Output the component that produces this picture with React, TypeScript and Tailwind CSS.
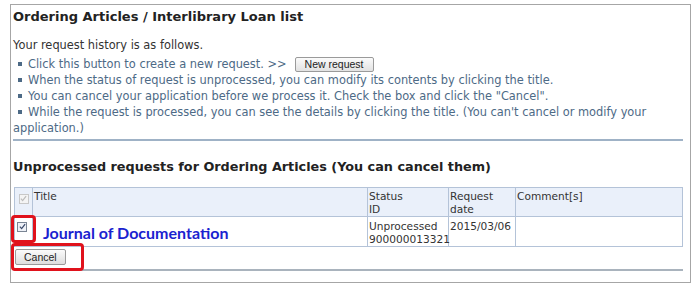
import React from "react";

const verdana = { fontFamily: '"DejaVu Sans", Verdana, sans-serif' };
const tahoma = { fontFamily: '"Liberation Sans", Tahoma, sans-serif' };

function Box({ checked, disabled }: { checked?: boolean; disabled?: boolean }) {
  return (
    <span
      className={`inline-flex h-[10px] w-[10px] items-center justify-center border ${
        disabled ? "border-[#c8c8c8] bg-[#f4f4f4]" : "border-[#7a8594] bg-[#eef1f7]"
      }`}
    >
      {checked && (
        <svg width="7" height="7" viewBox="0 0 8 8">
          <path
            d="M1 4.2 L3 6.4 L7 1.2"
            fill="none"
            stroke={disabled ? "#bcbcbc" : "#3b4a6b"}
            strokeWidth="1.4"
          />
        </svg>
      )}
    </span>
  );
}

function Bullet({ children }: { children: React.ReactNode }) {
  return (
    <li className="flex">
      <span className="mr-[6px] mt-[6px] h-[4px] w-[4px] shrink-0 bg-[#4d6a86]" />
      <span>{children}</span>
    </li>
  );
}

export default function App() {
  return (
    <div className="h-[290px] w-[700px] bg-white pl-[10px] pt-[4px]" style={verdana}>
      <div className="relative h-[279px] w-[681px] border border-[#a6a6a6] pl-[2px] pr-[3px]">
        <h1 className="mt-[4px] text-[13px] font-bold leading-[16px] text-[#222]">
          Ordering Articles / Interlibrary Loan list
        </h1>

        <p className="mt-[12px] text-[11.4px] leading-[16px] text-[#333]">Your request history is as follows.</p>
        <ul className="mt-[3px] pl-[5px] text-[11.4px] leading-[16px] text-[#4d6a86]">
          <li className="flex items-center">
            <span className="mr-[6px] h-[4px] w-[4px] shrink-0 bg-[#4d6a86]" />
            Click this button to create a new request. &gt;&gt;
            <button
              className="ml-[8px] h-[15px] rounded-[2px] border border-[#9a9a9a] bg-gradient-to-b from-[#fbfbfb] to-[#e2e2e2] px-[9px] text-[10.5px] leading-[13px] text-[#222]"
              style={tahoma}
            >
              New request
            </button>
          </li>
          <Bullet>When the status of request is unprocessed, you can modify its contents by clicking the title.</Bullet>
          <Bullet>You can cancel your application before we process it. Check the box and click the "Cancel".</Bullet>
          <li className="-ml-[5px]">
            <span className="ml-[5px] mr-[6px] inline-block h-[4px] w-[4px] -translate-y-[2px] bg-[#4d6a86]" />
            While the request is processed, you can see the details by clicking the title. (You can't cancel or modify your
            application.)
          </li>
        </ul>

        <div className="mt-[3px] h-[2px] w-[670px] bg-[#9fb2c6]" />

        <h2 className="mt-[18px] text-[12.8px] font-bold leading-[16px] text-[#222]">
          Unprocessed requests for Ordering Articles (You can cancel them)
        </h2>

        <table className="ml-[1px] mt-[12px] w-[669px] table-fixed border-collapse text-[10.6px] leading-[13px] text-[#333]">
          <colgroup>
            <col className="w-[18px]" />
            <col />
            <col className="w-[81px]" />
            <col className="w-[67px]" />
            <col className="w-[167px]" />
          </colgroup>
          <thead>
            <tr className="h-[29px] bg-[#eaf0fa] align-top">
              <th className="border border-[#b4c3d8] px-[2px] pt-[4px] font-normal">
                <Box checked disabled />
              </th>
              <th className="border border-[#b4c3d8] px-[1px] pt-[2px] text-left font-normal">Title</th>
              <th className="border border-[#b4c3d8] px-[1px] pt-[2px] text-left font-normal">
                Status
                <br />
                ID
              </th>
              <th className="border border-[#b4c3d8] px-[1px] pt-[2px] text-left font-normal">
                Request
                <br />
                date
              </th>
              <th className="border border-[#b4c3d8] px-[1px] pt-[2px] text-left font-normal">Comment[s]</th>
            </tr>
          </thead>
          <tbody>
            <tr className="h-[30px] align-top">
              <td className="border border-[#b4c3d8] px-[2px] pt-[3px]">
                <Box checked />
              </td>
              <td className="border border-[#b4c3d8]" />
              <td className="whitespace-nowrap border border-[#b4c3d8] px-[1px] pt-[3px]">
                Unprocessed
                <br />
                900000013321
              </td>
              <td className="border border-[#b4c3d8] px-[1px] pt-[3px]">2015/03/06</td>
              <td className="border border-[#b4c3d8]" />
            </tr>
          </tbody>
        </table>

        <button
          className="ml-[2px] mt-[2px] block h-[16px] rounded-[2px] border border-[#9a9a9a] bg-gradient-to-b from-[#fbfbfb] to-[#dedede] px-[8px] text-[10.5px] leading-[14px] text-[#222]"
          style={tahoma}
        >
          Cancel
        </button>

        <div className="ml-[1px] mt-[4px] h-[2px] w-[669px] bg-[#a9b3bd]" />

        {/* annotation overlays */}
        <span
          className="absolute left-[32px] top-[218px] text-[16px] font-bold leading-[20px] text-[#1a22cf]"
          style={{ fontFamily: 'Lato, "Open Sans", sans-serif' }}
        >
          Journal of Documentation
        </span>
        <div className="absolute left-[0px] top-[210px] h-[28px] w-[25px] rounded-[4px] border-[3px] border-[#e0121c]" />
        <div className="absolute left-[0px] top-[238px] h-[28px] w-[73px] rounded-[4px] border-[3px] border-[#e0121c]" />
      </div>
    </div>
  );
}
